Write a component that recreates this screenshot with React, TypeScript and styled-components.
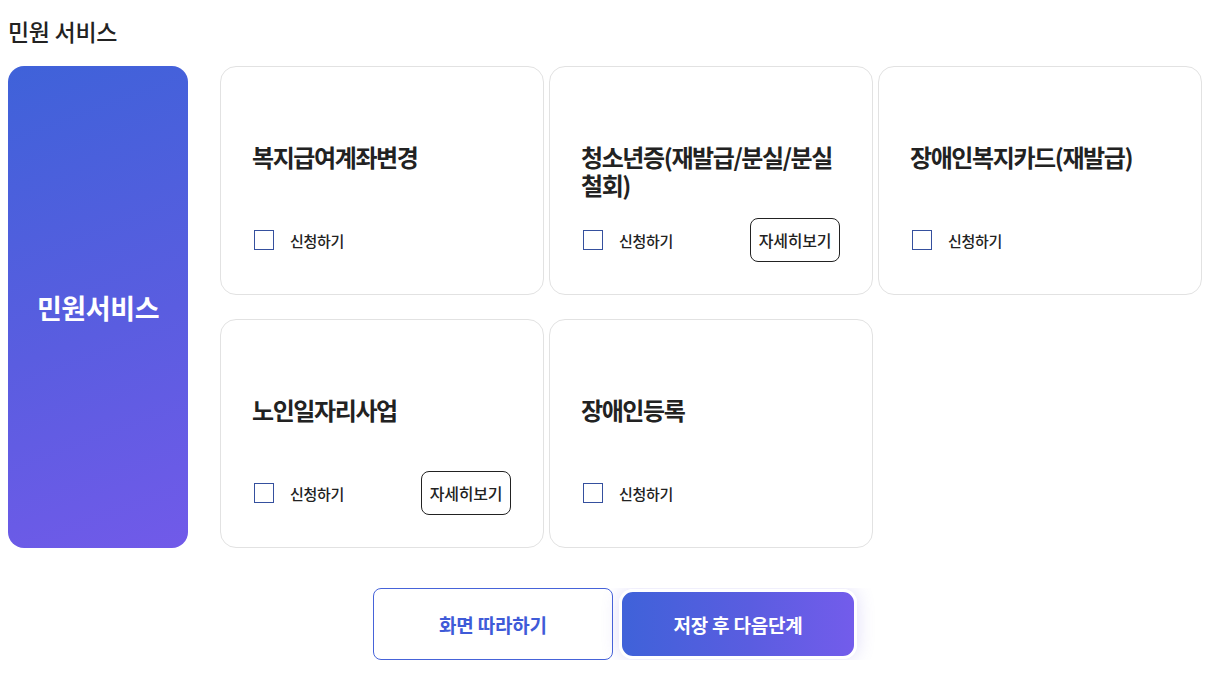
import React from "react";
import styled, { createGlobalStyle } from "styled-components";

const GlobalStyle = createGlobalStyle`
  html, body { margin: 0; padding: 0; background: #fff; }
  body { font-family: "Noto Sans CJK KR", "Noto Sans", sans-serif; color: #222; }
  * { box-sizing: border-box; }
`;

const Page = styled.div`
  padding: 15px 8px 0 8px;
  width: 1231px;
`;

const Heading = styled.h2`
  margin: 0 0 18px 0;
  font-size: 23px;
  line-height: 33px;
  font-weight: 500;
  letter-spacing: -0.3px;
  color: #222;
`;

const Main = styled.div`
  display: flex;
  gap: 32px;
  align-items: stretch;
`;

const SidePanel = styled.div`
  width: 180px;
  flex: none;
  border-radius: 16px;
  background: linear-gradient(160deg, #3f62d9 0%, #5a5de0 55%, #715ae9 100%);
  display: flex;
  align-items: center;
  justify-content: center;
  color: #fff;
  font-size: 27px;
  font-weight: 700;
  letter-spacing: -0.4px;
`;

const CardGrid = styled.div`
  display: grid;
  grid-template-columns: repeat(3, 324px);
  grid-auto-rows: 229px;
  column-gap: 5px;
  row-gap: 24px;
`;

const Card = styled.div`
  border: 1px solid #e2e2e2;
  border-radius: 16px;
  background: #fff;
  padding: 76px 32px 32px 31px;
  display: flex;
  flex-direction: column;
`;

const CardTitle = styled.div`
  font-size: 24px;
  line-height: 28px;
  font-weight: 700;
  letter-spacing: -1.4px;
  color: #222;
  word-break: keep-all;
`;

const CardFooter = styled.div`
  margin-top: auto;
  height: 44px;
  display: flex;
  align-items: center;
  justify-content: space-between;
`;

const CheckLabel = styled.label`
  display: flex;
  align-items: center;
  gap: 16px;
  font-size: 15px;
  font-weight: 500;
  letter-spacing: -0.3px;
  color: #222;
  cursor: pointer;
  padding-left: 2px;
`;

const CheckBox = styled.input`
  appearance: none;
  margin: 0;
  width: 20px;
  height: 20px;
  border: 1.5px solid #35509e;
  background: #fff;
  border-radius: 0;
`;

const DetailButton = styled.button`
  height: 44px;
  width: 90px;
  padding: 0;
  border: 1px solid #222;
  border-radius: 8px;
  background: #fff;
  font-family: inherit;
  font-size: 16px;
  font-weight: 500;
  letter-spacing: -0.2px;
  color: #222;
`;

const ButtonBar = styled.div`
  margin-top: 40px;
  height: 72px;
  overflow: hidden;
  display: flex;
  justify-content: center;
  align-items: center;
  gap: 6px;
  padding-right: 1px;
`;

const OutlineButton = styled.button`
  width: 240px;
  height: 72px;
  border: 1px solid #4663d9;
  border-radius: 8px;
  background: #fff;
  color: #3f5bd8;
  font-family: inherit;
  font-size: 19px;
  font-weight: 700;
  letter-spacing: -0.2px;
`;

const PrimaryButton = styled.button`
  width: 238px;
  height: 70px;
  border: 3px solid #fff;
  border-radius: 14px;
  background: linear-gradient(90deg, #3f62d9 0%, #5a5de0 55%, #735ceb 100%);
  box-shadow: 0 0 18px rgba(110, 95, 225, 0.22);
  color: #fff;
  font-family: inherit;
  font-size: 19px;
  font-weight: 700;
  letter-spacing: -0.2px;
`;

type Service = { title: string; detail?: boolean };

const services: Service[] = [
  { title: "복지급여계좌변경" },
  { title: "청소년증(재발급/분실/분실 철회)", detail: true },
  { title: "장애인복지카드(재발급)" },
  { title: "노인일자리사업", detail: true },
  { title: "장애인등록" },
];

export default function App() {
  return (
    <>
      <GlobalStyle />
      <Page>
        <Heading>민원 서비스</Heading>
        <Main>
          <SidePanel>민원서비스</SidePanel>
          <CardGrid>
            {services.map((s) => (
              <Card key={s.title}>
                <CardTitle>{s.title}</CardTitle>
                <CardFooter>
                  <CheckLabel>
                    <CheckBox type="checkbox" />
                    신청하기
                  </CheckLabel>
                  {s.detail && <DetailButton>자세히보기</DetailButton>}
                </CardFooter>
              </Card>
            ))}
          </CardGrid>
        </Main>
        <ButtonBar>
          <OutlineButton>화면 따라하기</OutlineButton>
          <PrimaryButton>저장 후 다음단계</PrimaryButton>
        </ButtonBar>
      </Page>
    </>
  );
}
